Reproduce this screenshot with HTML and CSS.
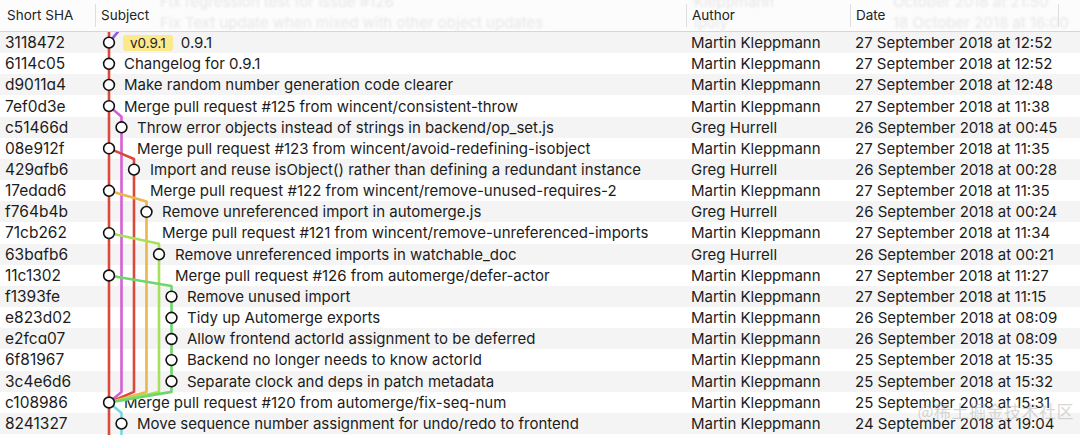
FILE: index.html
```html
<!DOCTYPE html>
<html>
<head>
<meta charset="utf-8">
<link rel="stylesheet" href="styles.css">
</head>
<body>
<div class="table">
  <div class="header">
    <div class="ghost">
      <div class="ghost-row"><span class="g-subject">Fix regression test for issue #126</span><span class="g-author">Kleppmann</span><span class="g-date">October 2018 at 21:50</span></div>
      <div class="ghost-row"><span class="g-subject">Fix Text update when mixed with other object updates</span><span class="g-author">ipoly</span><span class="g-date">18 October 2018 at 16:00</span></div>
    </div>
    <div class="hcell sha">Short SHA</div>
    <div class="hcell subject">Subject</div>
    <div class="hcell author">Author</div>
    <div class="hcell date">Date</div>
    <div class="hcell rest"></div>
  </div>
  <div class="rows">
    <div class="row"><div class="cell sha">3118472</div><div class="cell subject i0"><span class="tag">v0.9.1</span>0.9.1</div><div class="cell author">Martin Kleppmann</div><div class="cell date">27 September 2018 at 12:52</div></div>
    <div class="row"><div class="cell sha">6114c05</div><div class="cell subject i0">Changelog for 0.9.1</div><div class="cell author">Martin Kleppmann</div><div class="cell date">27 September 2018 at 12:52</div></div>
    <div class="row"><div class="cell sha">d9011a4</div><div class="cell subject i0">Make random number generation code clearer</div><div class="cell author">Martin Kleppmann</div><div class="cell date">27 September 2018 at 12:48</div></div>
    <div class="row"><div class="cell sha">7ef0d3e</div><div class="cell subject i0">Merge pull request #125 from wincent/consistent-throw</div><div class="cell author">Martin Kleppmann</div><div class="cell date">27 September 2018 at 11:38</div></div>
    <div class="row"><div class="cell sha">c51466d</div><div class="cell subject i1">Throw error objects instead of strings in backend/op_set.js</div><div class="cell author">Greg Hurrell</div><div class="cell date">26 September 2018 at 00:45</div></div>
    <div class="row"><div class="cell sha">08e912f</div><div class="cell subject i1">Merge pull request #123 from wincent/avoid-redefining-isobject</div><div class="cell author">Martin Kleppmann</div><div class="cell date">27 September 2018 at 11:35</div></div>
    <div class="row"><div class="cell sha">429afb6</div><div class="cell subject i2">Import and reuse isObject() rather than defining a redundant instance</div><div class="cell author">Greg Hurrell</div><div class="cell date">26 September 2018 at 00:28</div></div>
    <div class="row"><div class="cell sha">17edad6</div><div class="cell subject i2">Merge pull request #122 from wincent/remove-unused-requires-2</div><div class="cell author">Martin Kleppmann</div><div class="cell date">27 September 2018 at 11:35</div></div>
    <div class="row"><div class="cell sha">f764b4b</div><div class="cell subject i3">Remove unreferenced import in automerge.js</div><div class="cell author">Greg Hurrell</div><div class="cell date">26 September 2018 at 00:24</div></div>
    <div class="row"><div class="cell sha">71cb262</div><div class="cell subject i3">Merge pull request #121 from wincent/remove-unreferenced-imports</div><div class="cell author">Martin Kleppmann</div><div class="cell date">27 September 2018 at 11:34</div></div>
    <div class="row"><div class="cell sha">63bafb6</div><div class="cell subject i4">Remove unreferenced imports in watchable_doc</div><div class="cell author">Greg Hurrell</div><div class="cell date">26 September 2018 at 00:21</div></div>
    <div class="row"><div class="cell sha">11c1302</div><div class="cell subject i4">Merge pull request #126 from automerge/defer-actor</div><div class="cell author">Martin Kleppmann</div><div class="cell date">27 September 2018 at 11:27</div></div>
    <div class="row"><div class="cell sha">f1393fe</div><div class="cell subject i5">Remove unused import</div><div class="cell author">Martin Kleppmann</div><div class="cell date">27 September 2018 at 11:15</div></div>
    <div class="row"><div class="cell sha">e823d02</div><div class="cell subject i5">Tidy up Automerge exports</div><div class="cell author">Martin Kleppmann</div><div class="cell date">26 September 2018 at 08:09</div></div>
    <div class="row"><div class="cell sha">e2fca07</div><div class="cell subject i5">Allow frontend actorId assignment to be deferred</div><div class="cell author">Martin Kleppmann</div><div class="cell date">26 September 2018 at 08:09</div></div>
    <div class="row"><div class="cell sha">6f81967</div><div class="cell subject i5">Backend no longer needs to know actorId</div><div class="cell author">Martin Kleppmann</div><div class="cell date">25 September 2018 at 15:35</div></div>
    <div class="row"><div class="cell sha">3c4e6d6</div><div class="cell subject i5">Separate clock and deps in patch metadata</div><div class="cell author">Martin Kleppmann</div><div class="cell date">25 September 2018 at 15:32</div></div>
    <div class="row"><div class="cell sha">c108986</div><div class="cell subject i0">Merge pull request #120 from automerge/fix-seq-num</div><div class="cell author">Martin Kleppmann</div><div class="cell date">25 September 2018 at 15:31</div></div>
    <div class="row"><div class="cell sha">8241327</div><div class="cell subject i1">Move sequence number assignment for undo/redo to frontend</div><div class="cell author">Martin Kleppmann</div><div class="cell date">24 September 2018 at 19:04</div></div>
  </div>
  <svg class="graph" width="1080" height="435" viewBox="0 0 1080 435">
    <g fill="none" stroke-width="2.6" stroke-linejoin="round">
      <path d="M109 28 L109 435" stroke="#d9493c"/>
      <path d="M121 28 L109 42.6" stroke="#8f5ce0"/>
      <path d="M109 106.1 L121.5 116.7 L121.5 391.9 L109 402.5" stroke="#d75ed6"/>
      <path d="M109 148.4 L134 159 L134 391.9 L109 402.5" stroke="#d9493c"/>
      <path d="M109 190.8 L146.5 201.4 L146.5 391.9 L109 402.5" stroke="#e9b74c"/>
      <path d="M109 233.1 L159 243.7 L159 391.9 L109 402.5" stroke="#a8e05c"/>
      <path d="M109 275.5 L171.5 286 L171.5 391.9 L109 402.5" stroke="#6fd66c"/>
      <path d="M109 402.5 L121.5 413.1 L121.5 435" stroke="#74d9e2"/>
    </g>
    <g fill="#fff" stroke="#111" stroke-width="1.6">
      <circle cx="109" cy="42.6" r="5.4"/>
      <circle cx="109" cy="63.8" r="5.4"/>
      <circle cx="109" cy="84.9" r="5.4"/>
      <circle cx="109" cy="106.1" r="5.4"/>
      <circle cx="121.5" cy="127.3" r="5.4"/>
      <circle cx="109" cy="148.4" r="5.4"/>
      <circle cx="134" cy="169.6" r="5.4"/>
      <circle cx="109" cy="190.8" r="5.4"/>
      <circle cx="146.5" cy="211.9" r="5.4"/>
      <circle cx="109" cy="233.1" r="5.4"/>
      <circle cx="159" cy="254.3" r="5.4"/>
      <circle cx="109" cy="275.5" r="5.4"/>
      <circle cx="171.5" cy="296.6" r="5.4"/>
      <circle cx="171.5" cy="317.8" r="5.4"/>
      <circle cx="171.5" cy="339" r="5.4"/>
      <circle cx="171.5" cy="360.1" r="5.4"/>
      <circle cx="171.5" cy="381.3" r="5.4"/>
      <circle cx="109" cy="402.5" r="5.4"/>
      <circle cx="121.5" cy="423.6" r="5.4"/>
    </g>
  </svg>
  <div class="watermark">@稀土掘金技术社区</div>
</div>
</body>
</html>
```
FILE: styles.css
```css
html, body {
  margin: 0;
  padding: 0;
  background: #ffffff;
}
body {
  font-family: Inter, "Noto Sans", "Liberation Sans", sans-serif;
  color: #1c1c1c;
  width: 1080px;
  height: 435px;
  overflow: hidden;
}
.table {
  position: relative;
  width: 1080px;
  height: 435px;
  overflow: hidden;
}
.header {
  position: relative;
  height: 31px;
  border-bottom: 1px solid #d6d6d6;
  background: #fcfcfc;
  display: grid;
  grid-template-columns: 95px 591px 164px 208px 22px;
  align-items: center;
  z-index: 2;
}
.ghost {
  position: absolute;
  left: 0;
  top: -8px;
  right: 0;
  color: #e7e7e7;
  font-size: 15px;
  filter: blur(0.8px);
  z-index: 0;
}
.ghost-row {
  height: 21px;
  position: relative;
}
.ghost-row span {
  position: absolute;
  white-space: nowrap;
}
.g-subject { left: 160px; }
.g-author { left: 694px; }
.g-date { left: 893px; }
.hcell {
  position: relative;
  z-index: 1;
  font-size: 13.5px;
  height: 23px;
  line-height: 23px;
  padding-left: 6px;
  color: #222;
  white-space: nowrap;
}
.hcell.sha { padding-left: 7px; }
.hcell.subject,
.hcell.author,
.hcell.date,
.hcell.rest {
  border-left: 1px solid #dedede;
  padding-left: 5px;
}
.rows {
  display: flex;
  flex-direction: column;
}
.row {
  height: 21.17px;
  display: grid;
  grid-template-columns: 96px 590px 164px 230px;
  align-items: center;
  font-size: 15px;
  white-space: nowrap;
}
.row:nth-child(odd) {
  background: #f4f4f4;
}
.cell {
  overflow: hidden;
}
.cell.sha {
  padding-left: 5px;
  font-size: 15.5px;
  font-feature-settings: "cv11" 1;
}
.cell.author { padding-left: 5px; }
.cell.date { padding-left: 5px; }
.subject.i0 { padding-left: 28px; }
.subject.i1 { padding-left: 41px; }
.subject.i2 { padding-left: 54px; }
.subject.i3 { padding-left: 66px; }
.subject.i4 { padding-left: 79px; }
.subject.i5 { padding-left: 91px; }
.tag {
  display: inline-block;
  background: #fbe98c;
  border-radius: 3px;
  font-size: 13.5px;
  line-height: 16px;
  padding: 0 7px;
  margin-left: -1px;
  margin-right: 8px;
  color: #222;
}
.graph {
  position: absolute;
  left: 0;
  top: 0;
  z-index: 1;
  pointer-events: none;
}
.watermark {
  position: absolute;
  right: 6px;
  bottom: 12px;
  z-index: 3;
  font-family: "Noto Sans CJK SC", sans-serif;
  font-size: 17px;
  color: rgba(180, 180, 180, 0.55);
  letter-spacing: 0.5px;
}
```
